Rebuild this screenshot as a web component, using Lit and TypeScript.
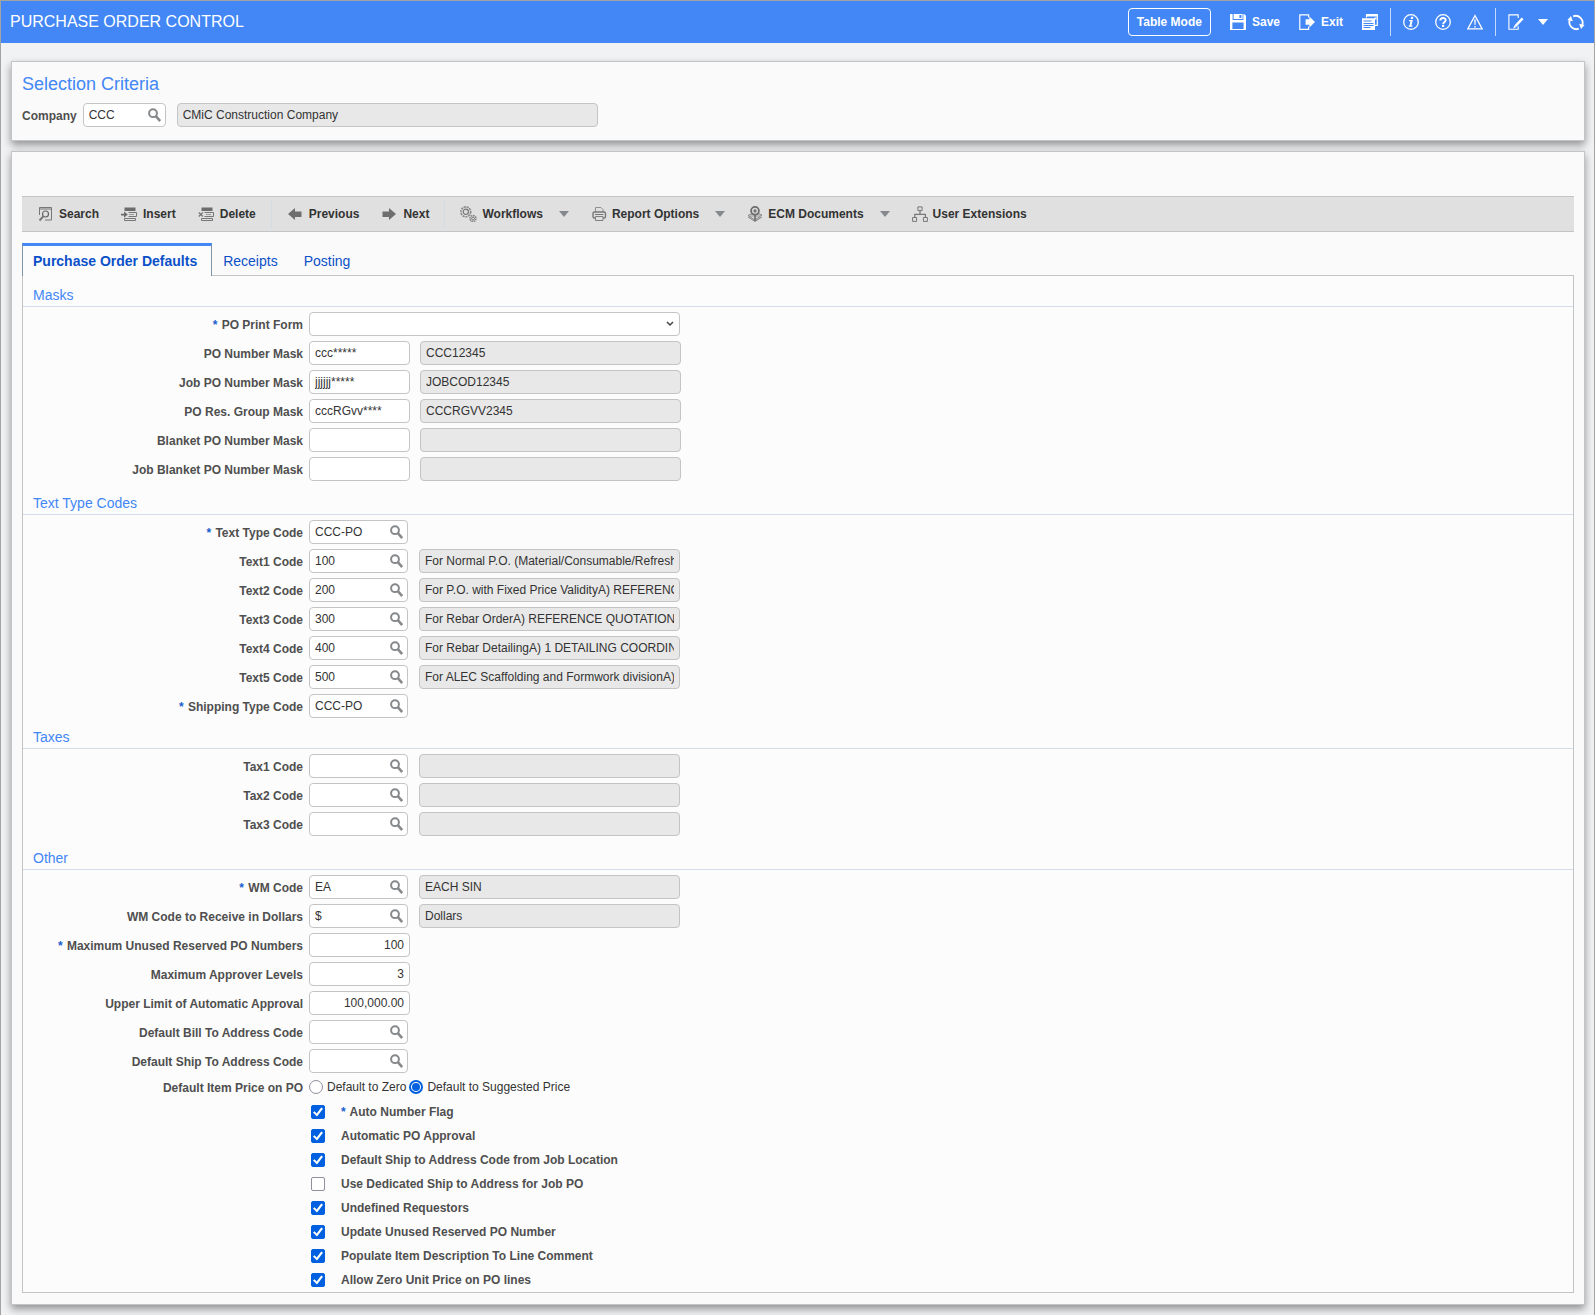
import { LitElement, html, css, svg, nothing, type TemplateResult } from "lit";
import { customElement, property, state } from "lit/decorators.js";

type Row =
  | { kind: "select"; id: string; label: string; required?: boolean }
  | { kind: "mask"; id: string; label: string; value: string; sample: string; required?: boolean }
  | { kind: "lookup"; id: string; label: string; value: string; desc?: string; required?: boolean }
  | { kind: "number"; id: string; label: string; value: string; required?: boolean };

interface Section {
  title: string;
  rows: Row[];
  tight?: boolean;
}

const SECTIONS: Section[] = [
  {
    title: "Masks",
    rows: [
      { kind: "select", id: "print-form", label: "PO Print Form", required: true },
      { kind: "mask", id: "po-mask", label: "PO Number Mask", value: "ccc*****", sample: "CCC12345" },
      { kind: "mask", id: "job-mask", label: "Job PO Number Mask", value: "jjjjjj*****", sample: "JOBCOD12345" },
      { kind: "mask", id: "group-mask", label: "PO Res. Group Mask", value: "cccRGvv****", sample: "CCCRGVV2345" },
      { kind: "mask", id: "blanket-mask", label: "Blanket PO Number Mask", value: "", sample: "" },
      { kind: "mask", id: "job-blanket-mask", label: "Job Blanket PO Number Mask", value: "", sample: "" },
    ],
  },
  {
    title: "Text Type Codes",
    tight: true,
    rows: [
      { kind: "lookup", id: "text-type", label: "Text Type Code", value: "CCC-PO", required: true },
      { kind: "lookup", id: "text1", label: "Text1 Code", value: "100", desc: "For Normal P.O. (Material/Consumable/Refreshment)" },
      { kind: "lookup", id: "text2", label: "Text2 Code", value: "200", desc: "For P.O. with Fixed Price ValidityA) REFERENCE QUOTATION" },
      { kind: "lookup", id: "text3", label: "Text3 Code", value: "300", desc: "For Rebar OrderA) REFERENCE QUOTATION" },
      { kind: "lookup", id: "text4", label: "Text4 Code", value: "400", desc: "For Rebar DetailingA) 1 DETAILING COORDINATION" },
      { kind: "lookup", id: "text5", label: "Text5 Code", value: "500", desc: "For ALEC Scaffolding and Formwork divisionA) REFERENCE" },
      { kind: "lookup", id: "ship-type", label: "Shipping Type Code", value: "CCC-PO", required: true },
    ],
  },
  {
    title: "Taxes",
    rows: [
      { kind: "lookup", id: "tax1", label: "Tax1 Code", value: "", desc: "" },
      { kind: "lookup", id: "tax2", label: "Tax2 Code", value: "", desc: "" },
      { kind: "lookup", id: "tax3", label: "Tax3 Code", value: "", desc: "" },
    ],
  },
  {
    title: "Other",
    rows: [
      { kind: "lookup", id: "wm", label: "WM Code", value: "EA", desc: "EACH SIN", required: true },
      { kind: "lookup", id: "wm-dollars", label: "WM Code to Receive in Dollars", value: "$", desc: "Dollars" },
      { kind: "number", id: "max-unused", label: "Maximum Unused Reserved PO Numbers", value: "100", required: true },
      { kind: "number", id: "max-levels", label: "Maximum Approver Levels", value: "3" },
      { kind: "number", id: "upper-limit", label: "Upper Limit of Automatic Approval", value: "100,000.00" },
      { kind: "lookup", id: "bill-to", label: "Default Bill To Address Code", value: "" },
      { kind: "lookup", id: "ship-to", label: "Default Ship To Address Code", value: "" },
    ],
  },
];

const FLAGS: { label: string; on: boolean; required?: boolean }[] = [
  { label: "Auto Number Flag", on: true, required: true },
  { label: "Automatic PO Approval", on: true },
  { label: "Default Ship to Address Code from Job Location", on: true },
  { label: "Use Dedicated Ship to Address for Job PO", on: false },
  { label: "Undefined Requestors", on: true },
  { label: "Update Unused Reserved PO Number", on: true },
  { label: "Populate Item Description To Line Comment", on: true },
  { label: "Allow Zero Unit Price on PO lines", on: true },
];

const TABS = ["Purchase Order Defaults", "Receipts", "Posting"];

const ICONS: Record<string, TemplateResult> = {
  lens: svg`<circle cx="6" cy="6.2" r="3.9" fill="none" stroke="#86898c" stroke-width="2"/><path d="M8.8 9.2 13.2 14" stroke="#86898c" stroke-width="2.6"/>`,
  save: svg`<path fill="#fff" d="M0 0h2.6v6h10.8V0H14l2 1.8V16H0z"/><path fill="#fff" d="M3.6 0h9v5h-9z"/><path fill="#4287f5" d="M9.4 1h2v3h-2zM2.4 8.6h11.2V15H2.4z"/>`,
  exit: svg`<path fill="none" stroke="#fff" stroke-width="1.2" d="M9.6 3.6V.8H.8v14.6h8.8v-2.8"/><path fill="#fff" d="M6.6 5.2h3.8V2.6L16 8l-5.6 5.4v-2.6H6.6z"/>`,
  pages: svg`<path fill="none" stroke="#fff" stroke-width="1.2" d="M4.500 3.500V.7h10.800v10.600h-2.500"/><path fill="#fff" d="M4.500.5h11v2h-11zM0 4.200h13V16H0z"/><path stroke="#4287f5" d="M1.500 7h8M1.500 9.500h10M1.500 11.500h10M1.500 13.500h7"/><path fill="#fff" d="M12.500 3.500h2v2h-2z"/>`,
  info: svg`<circle cx="8" cy="8" r="7.3" fill="none" stroke="#fff" stroke-width="1.3"/><path fill="#fff" d="M8.200 2.800h2.200l-.5 2.100H7.700zM6.200 6h3.600l-1.400 5.500h1.100l-.3 1.200H5.600l.3-1.200h.6l1-4.300H6z"/>`,
  help: svg`<circle cx="8" cy="8" r="7.3" fill="none" stroke="#fff" stroke-width="1.3"/><path fill="none" stroke="#fff" stroke-width="1.9" d="M5.300 6.600c0-3.400 5.400-3.300 5.400-.4 0 1.800-2.600 1.700-2.600 4"/><path fill="#fff" d="M7 11h2.200v2H7z"/>`,
  warn: svg`<path fill="none" stroke="#fff" stroke-width="1.2" d="M8 1.600 15.200 14.900H.8z"/><path fill="#fff" d="M7.200 5.500h1.600L8.500 11h-1zM7.300 12h1.400v1.400H7.300z"/>`,
  edit: svg`<path fill="none" stroke="#fff" stroke-width="1.1" d="M10.200 4V.9H.9v14.400h9.300v-3"/><path stroke="#fff" stroke-width="2.500" d="M14.600 4.300 7.500 12"/><path fill="#fff" d="m6.400 11.200 1.900 1.900-3 1.300z"/>`,
  refresh: svg`<path fill="none" stroke="#fff" stroke-width="1.8" d="M6.200 2.300a6.900 6.900 0 0 1 9 8.800M11.800 14.700a6.900 6.900 0 0 1-9-8.800"/><path fill="#fff" d="M12.200 9.800 17.600 11l-3.600 4zM5.800 7.200.4 6 4 2z"/>`,
  down: svg`<path d="M0 0h10L5 6z" fill="currentColor"/>`,
  search: svg`<path fill="none" stroke="#777" d="M2.500 9V1.500h12v12.500H8"/><path stroke="#777" d="M2.500 3h12"/><circle cx="8.500" cy="8" r="3" fill="none" stroke="#666" stroke-width="1.2"/><path stroke="#777" stroke-width="2" d="M6.300 10.300 2.500 14.500"/>`,
  insert: svg`<path fill="#6c6c6c" d="M3.500 1.500h11v3.500h-11zM0 7.700h3V5.500L6.800 8.600 3 11.700V9.500H0z"/><path fill="none" stroke="#777" d="M7.500 6.500h8v4h-8M3.500 12.500v2h11v-2z"/><path stroke="#999" d="M8 8.500h5"/>`,
  remove: svg`<path fill="#6c6c6c" d="M3.500 1.500h11v3.500h-11z"/><path fill="none" stroke="#777" d="M6.500 6.500h9v4h-9M3.500 12.500v2h11v-2z"/><path stroke="#777" stroke-width="1.3" d="m.8 6.500 4 4M4.800 6.500l-4 4"/><path stroke="#999" d="M8 8.500h5"/>`,
  prev: svg`<path fill="#6e6e6e" d="M1 8 8 2v3.500h6.500v5.500H8v3z"/>`,
  next: svg`<path fill="#6e6e6e" d="M15 8 8 2v3.500H1.500v5.500H8v3z"/>`,
  gears: svg`<circle cx="5.800" cy="5.800" r="4.900" fill="none" stroke="#8a8a8a" stroke-width="1.600" stroke-dasharray="2.200 .7"/><circle cx="5.800" cy="5.800" r="2.600" fill="none" stroke="#777" stroke-width="1.200"/><circle cx="13" cy="12.500" r="3" fill="none" stroke="#8a8a8a" stroke-width="1.600" stroke-dasharray="1.700 .6"/><circle cx="13" cy="12.500" r="1.400" fill="none" stroke="#777"/>`,
  printer: svg`<path fill="none" stroke="#909090" d="M4.500 6V1.500h5.500l2 2V6"/><rect x="2" y="6" width="12.500" height="6" rx="1.500" fill="none" stroke="#777" stroke-width="1.400"/><path stroke="#777" d="M4 8.500h8.500"/><path fill="#e0e0e0" stroke="#808080" d="M4.500 10.500h7.500v4H4.500z"/>`,
  ecm: svg`<path fill="#bbb" stroke="#8c8c8c" d="M1 9.500 5 7.500h6.500l3.500 1.500-7 5zM1 11l7 4.500 7-4.500"/><circle cx="8" cy="4.800" r="3.900" fill="#ddd" stroke="#6c6c6c" stroke-width="1.800"/><path fill="#777" d="M8 2.800 10 5 8 7 6 5zM7.100 8.500h2V15h-2z"/>`,
  tree: svg`<path fill="none" stroke="#777" stroke-width="1.200" d="M8 4.500V8M2.800 11V8.300h10.600V11"/><path fill="none" stroke="#777" d="M5.900.900h4.200v3.700H5.900zM.600 11.500h4v3.900h-4zM11.400 11.500h4v3.900h-4z"/>`,
};

/** Small inline glyph drawn on its own view box. */
function icon(name: string, w = 16, h = 16): TemplateResult {
  return html`<svg class="icon" width=${w} height=${h} viewBox="0 0 ${w} ${h}" aria-hidden="true">${ICONS[name]}</svg>`;
}

const shared = css`
  *,
  *::before {
    box-sizing: border-box;
  }
  button {
    display: flex;
    align-items: center;
    gap: 6px;
    padding: 0;
    border: 0;
    background: none;
    font: inherit;
    color: inherit;
    white-space: nowrap;
    cursor: pointer;
  }
  .icon {
    display: block;
    flex: none;
  }
`;

@customElement("app-header")
class AppHeader extends LitElement {
  static styles = [
    shared,
    css`
      :host {
        display: block;
      }
      .bar {
        display: flex;
        align-items: center;
        justify-content: space-between;
        height: 42px;
        padding: 0 9px;
        background: #4287f5;
        color: #fff;
      }
      h1 {
        margin: 0;
        font-size: 16px;
        font-weight: 400;
      }
      .tools,
      .group {
        display: flex;
        align-items: center;
        font-weight: 700;
      }
      .tools {
        gap: 12px;
      }
      .main {
        gap: 19px;
      }
      .aux {
        gap: 16px;
      }
      .menu {
        gap: 14px;
      }
      .mode {
        height: 28px;
        padding: 0 8px;
        border: 1px solid #fff;
        border-radius: 4px;
      }
      .rule {
        width: 1px;
        height: 28px;
        background: #c4dafc;
      }
    `,
  ];

  render() {
    return html`
      <header class="bar">
        <h1>PURCHASE ORDER CONTROL</h1>
        <div class="tools">
          <div class="group main">
            <button class="mode" type="button">Table Mode</button>
            <button type="button">${icon("save")}Save</button>
            <button type="button">${icon("exit")}Exit</button>
            <button type="button" aria-label="Windows">${icon("pages")}</button>
          </div>
          <span class="rule"></span>
          <div class="group aux">
            <button type="button" aria-label="Information">${icon("info")}</button>
            <button type="button" aria-label="Help">${icon("help")}</button>
            <button type="button" aria-label="Warnings">${icon("warn")}</button>
          </div>
          <span class="rule"></span>
          <div class="group main">
            <div class="group menu">
              <button type="button" aria-label="Edit">${icon("edit")}</button>
              <button type="button" aria-label="Edit options">${icon("down", 10, 6)}</button>
            </div>
            <button type="button" aria-label="Refresh">${icon("refresh", 18, 17)}</button>
          </div>
        </div>
      </header>
    `;
  }
}

@customElement("app-toolbar")
class AppToolbar extends LitElement {
  static styles = [
    shared,
    css`
      :host {
        display: block;
      }
      .bar {
        display: flex;
        align-items: center;
        height: 36px;
        gap: 22px;
        padding: 0 15px;
        background: #e0e0e0;
        border: solid #c4c4c4;
        border-width: 1px 0;
        font-weight: 700;
        color: #333;
      }
      .rule {
        width: 1px;
        height: 28px;
        margin: 0 -7px;
        background: #d3dde5;
      }
      .menu {
        display: flex;
        align-items: center;
        gap: 16px;
      }
      .snug {
        gap: 5px;
      }
      .arrow {
        color: #85898d;
      }
    `,
  ];

  private item(name: string, label: string) {
    return html`<button type="button">${icon(name)}${label}</button>`;
  }

  private snug(name: string, label: string, w = 16) {
    return html`<button class="snug" type="button">${icon(name, w)}${label}</button>`;
  }

  private menu(name: string, label: string, w = 16) {
    return html`<div class="menu">
      ${this.snug(name, label, w)}
      <button class="arrow" type="button" aria-label="${label} menu">${icon("down", 10, 6)}</button>
    </div>`;
  }

  render() {
    return html`
      <div class="bar" role="toolbar" aria-label="Record actions">
        ${this.item("search", "Search")} ${this.item("insert", "Insert")} ${this.item("remove", "Delete")}
        <span class="rule"></span>
        ${this.item("prev", "Previous")} ${this.item("next", "Next")}
        <span class="rule"></span>
        ${this.menu("gears", "Workflows", 17)} ${this.menu("printer", "Report Options")}
        ${this.menu("ecm", "ECM Documents")} ${this.snug("tree", "User Extensions")}
      </div>
    `;
  }
}

const fieldStyles = css`
  input,
  select {
    font: inherit;
    color: #333;
    margin: 0;
  }
  .box {
    height: 24px;
    border: 1px solid #c4c4c4;
    border-radius: 4px;
    background: #fff;
    padding: 0 5px;
  }
  .readout {
    background: #e8e8e8;
  }
`;

@customElement("lookup-field")
class LookupField extends LitElement {
  @property() label = "";
  @property() value = "";

  static styles = [
    shared,
    fieldStyles,
    css`
      :host {
        display: block;
      }
      .box {
        display: flex;
        align-items: center;
        padding: 0 4px 0 0;
      }
      input {
        flex: 1;
        min-width: 0;
        height: 22px;
        padding: 0 0 0 5px;
        border: 0;
        background: none;
        outline: 0;
      }
    `,
  ];

  render() {
    return html`<div class="box">
      <input type="text" aria-label=${this.label} .value=${this.value} />
      <button type="button" aria-label="Look up ${this.label}">${icon("lens", 14, 16)}</button>
    </div>`;
  }
}

@customElement("app-root")
class AppRoot extends LitElement {
  @state() private tab = 0;

  static styles = [
    shared,
    fieldStyles,
    css`
      :host {
        display: block;
        box-sizing: border-box;
        min-height: 100vh;
        border: 1px solid #a3a3a3;
        background: #f1f2f4;
        font: 12px/16px "Liberation Sans", Arial, sans-serif;
        color: #333;
      }
      main {
        display: grid;
        gap: 10px;
        padding: 18px 9px 10px 10px;
      }
      .panel {
        background: #fafafa;
        border: 1px solid #c4c4c4;
        box-shadow: 0 4px 8px rgba(0, 0, 0, 0.4);
        padding: 0 10px;
      }
      .criteria {
        height: 80px;
        padding-top: 12px;
      }
      .criteria h2 {
        margin: 0 0 9px;
        font-size: 18px;
        line-height: 20px;
        font-weight: 400;
        color: #4287f5;
      }
      .company {
        display: flex;
        align-items: center;
        gap: 6px;
      }
      .label {
        font-weight: 700;
        color: #4f4f4f;
        padding-top: 1px;
      }
      .star {
        margin-right: 1px;
        color: #1a5fce;
      }
      .code {
        width: 83px;
      }
      .name {
        width: 421px;
        margin-left: 5px;
      }
      .work {
        padding-top: 44px;
        padding-bottom: 11px;
      }
      .tabs {
        display: flex;
        align-items: stretch;
        height: 33px;
        margin: 11px 0 -1px;
        font-size: 14px;
        color: #0b50c8;
      }
      .tab {
        padding: 0 11px;
        margin-right: 4px;
        border-top: 3px solid transparent;
      }
      .current {
        position: relative;
        margin-right: 0;
        padding: 0 14px 0 10px;
        font-weight: 700;
        background: #fcfcfc;
        border: solid #7c95a8;
        border-width: 3px 1px 0;
        border-top-color: #4287f5;
      }
      .sheet {
        border: 1px solid #c4c4c4;
        background: #fcfcfc;
        padding-top: 9px;
      }
      .sheet h3 {
        margin: 0 0 5px;
        padding: 2px 10px 3px;
        border-bottom: 1px solid #d3dde8;
        font-size: 14px;
        line-height: 16px;
        font-weight: 400;
        color: #4287f5;
      }
      .section {
        padding-bottom: 12px;
      }
      .tight {
        padding-bottom: 9px;
      }
      .last {
        padding-bottom: 0;
      }
      .rows {
        display: grid;
        gap: 5px;
      }
      .row {
        display: grid;
        grid-template-columns: 280px 1fr;
        column-gap: 6px;
        align-items: center;
      }
      .row > .label {
        text-align: right;
      }
      .fields {
        display: flex;
        gap: 11px;
      }
      .fields.mask {
        gap: 10px;
      }
      .pick {
        position: relative;
        display: flex;
        align-items: center;
        width: 371px;
      }
      select {
        width: 100%;
        appearance: none;
      }
      .chevron {
        position: absolute;
        right: 6px;
        pointer-events: none;
      }
      .short {
        width: 101px;
      }
      .number {
        text-align: right;
      }
      lookup-field.std {
        width: 99px;
      }
      .long {
        width: 261px;
      }
      .price {
        margin-top: 5px;
      }
      .choice {
        display: flex;
        align-items: center;
        gap: 3px;
        height: 18px;
      }
      .option {
        display: flex;
        align-items: center;
        gap: 4px;
        color: #333;
      }
      input[type="radio"],
      input[type="checkbox"] {
        appearance: none;
        flex: none;
        display: grid;
        place-items: center;
        width: 14px;
        height: 14px;
        border: 1px solid #8f8f9d;
        background: #fff;
      }
      input[type="radio"] {
        border-radius: 50%;
      }
      input[type="radio"]:checked {
        border: 2px solid #0060df;
      }
      input[type="radio"]:checked::before {
        content: "";
        width: 8px;
        height: 8px;
        border-radius: 50%;
        background: #0060df;
      }
      input[type="checkbox"] {
        border-radius: 2px;
      }
      input[type="checkbox"]:checked {
        border-color: #0060df;
        background: #0060df;
      }
      input[type="checkbox"]:checked::before {
        content: "";
        width: 10px;
        height: 10px;
        background: #fff;
        clip-path: polygon(0 56%, 15% 42%, 37% 64%, 82% 5%, 100% 18%, 40% 94%);
      }
      .flags {
        display: grid;
        margin: 4px 0 0 288px;
      }
      .flag {
        display: flex;
        align-items: center;
        gap: 16px;
        height: 24px;
        justify-self: start;
        font-weight: 700;
        color: #4f4f4f;
      }
    `,
  ];

  private mark(required?: boolean) {
    return required ? html`<span class="star">*</span> ` : nothing;
  }

  private readout(label: string, value: string, cls = "long") {
    return html`<input class="box readout ${cls}" type="text" readonly aria-label=${label} .value=${value} />`;
  }

  private control(row: Row) {
    switch (row.kind) {
      case "select":
        return html`<div class="pick">
          <select class="box" id=${row.id}>
            <option></option>
          </select>
          <svg class="chevron" width="8" height="6" viewBox="0 0 8 6" aria-hidden="true">
            <path d="M1 1l3 3 3-3" fill="none" stroke="#444" stroke-width="1.500" />
          </svg>
        </div>`;
      case "mask":
        return html`<div class="fields mask">
          <input class="box short" id=${row.id} type="text" .value=${row.value} />
          ${this.readout(`${row.label} sample`, row.sample)}
        </div>`;
      case "number":
        return html`<div class="fields">
          <input class="box short number" id=${row.id} type="text" inputmode="decimal" .value=${row.value} />
        </div>`;
      case "lookup":
        return html`<div class="fields">
          <lookup-field class="std" id=${row.id} .label=${row.label} .value=${row.value}></lookup-field>
          ${row.desc === undefined ? nothing : this.readout(`${row.label} description`, row.desc)}
        </div>`;
    }
  }

  private row(row: Row) {
    return html`<div class="row">
      <label class="label" for=${row.id}>${this.mark(row.required)}${row.label}</label>
      ${this.control(row)}
    </div>`;
  }

  private section(s: Section, i: number) {
    const last = i === SECTIONS.length - 1;
    return html`<section class="section ${s.tight ? "tight" : ""} ${last ? "last" : ""}">
      <h3>${s.title}</h3>
      <div class="rows">${s.rows.map((r) => this.row(r))}</div>
      ${last ? this.extras() : nothing}
    </section>`;
  }

  private extras() {
    return html`
      <div class="row price" role="radiogroup" aria-labelledby="price-label">
        <span class="label" id="price-label">Default Item Price on PO</span>
        <div class="choice">
          <label class="option"><input type="radio" name="price" />Default to Zero</label>
          <label class="option"><input type="radio" name="price" checked />Default to Suggested Price</label>
        </div>
      </div>
      <div class="flags">
        ${FLAGS.map(
          (f) => html`<label class="flag">
            <input type="checkbox" ?checked=${f.on} />
            <span>${this.mark(f.required)}${f.label}</span>
          </label>`
        )}
      </div>
    `;
  }

  render() {
    return html`
      <app-header></app-header>
      <main>
        <section class="panel criteria">
          <h2>Selection Criteria</h2>
          <div class="company">
            <label class="label" for="company">Company</label>
            <lookup-field class="code" id="company" label="Company" value="CCC"></lookup-field>
            ${this.readout("Company name", "CMiC Construction Company", "name")}
          </div>
        </section>
        <section class="panel work">
          <app-toolbar></app-toolbar>
          <div class="tabs" role="tablist">
            ${TABS.map(
              (t, i) => html`<button
                class="tab ${i === this.tab ? "current" : ""}"
                type="button"
                role="tab"
                aria-selected=${i === this.tab}
                @click=${() => (this.tab = i)}
              >
                ${t}
              </button>`
            )}
          </div>
          <div class="sheet" role="tabpanel">${SECTIONS.map((s, i) => this.section(s, i))}</div>
        </section>
      </main>
    `;
  }
}
